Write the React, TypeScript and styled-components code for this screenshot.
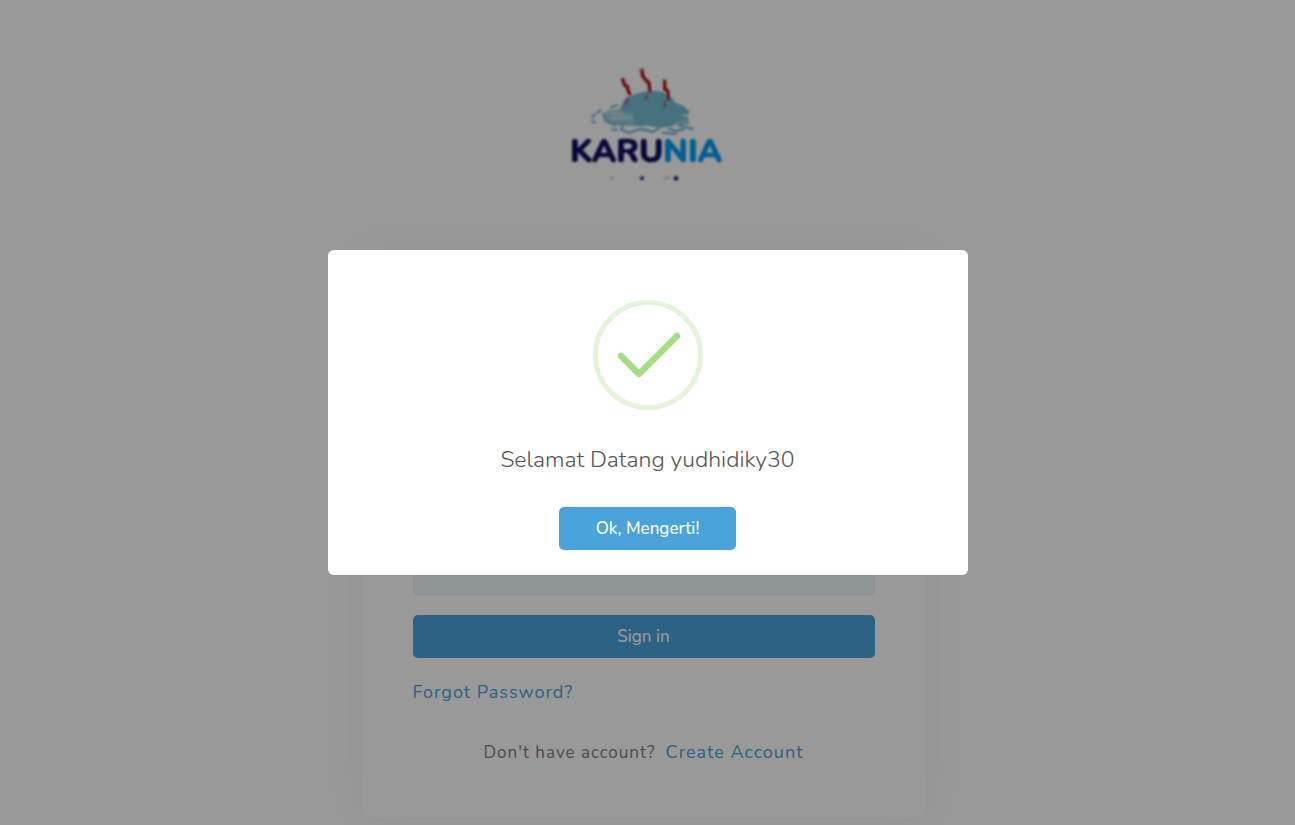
import React from "react";
import styled, { createGlobalStyle, css } from "styled-components";

const GlobalStyle = createGlobalStyle`
  *, *::before, *::after { box-sizing: border-box; }
  body {
    margin: 0;
    background: #ffffff;
    color: #7e7e7e;
    font-family: Nunito, "Open Sans", "Noto Sans", sans-serif;
    font-size: 17px;
    line-height: 24px;
  }
`;

const Page = styled.main`
  display: flex;
  flex-direction: column;
  align-items: center;
  padding: 55px 8px 8px 0;
`;

const Logo = styled.svg`
  width: 168px;
  height: 140px;
  margin-bottom: 60px;
`;

const Card = styled.form`
  display: flex;
  flex-direction: column;
  justify-content: flex-end;
  gap: 20px;
  width: 100%;
  max-width: 562px;
  min-height: 562px;
  padding: 50px;
  border-radius: 12px;
  background: #ffffff;
  box-shadow: 0 0 50px rgba(0, 0, 0, 0.05);
`;

const Field = styled.input`
  width: 100%;
  height: 43px;
  padding: 0 16px;
  border: 1px solid #ebf1f6;
  border-radius: 5px;
  background: #f1f8fd;
  font: inherit;
`;

const buttonStyle = css`
  height: 43px;
  padding: 0 37px;
  border: 0;
  border-radius: 5px;
  background: #4aa3da;
  color: #ffffff;
  font: inherit;
  font-weight: 500;
  cursor: pointer;
`;

const SubmitButton = styled.button`
  ${buttonStyle}
  width: 100%;
`;

const TextLink = styled.a`
  color: #4aa3da;
  font-size: 18px;
  letter-spacing: 1px;
  text-decoration: none;
`;

const ForgotRow = styled.div`
  display: flex;
  padding: 2px 0;
`;

const SignupRow = styled.p`
  display: flex;
  align-items: baseline;
  justify-content: center;
  gap: 10px;
  margin: 14px 0 2px;
  letter-spacing: 1px;
`;

const Backdrop = styled.div`
  position: fixed;
  inset: 0;
  display: flex;
  align-items: center;
  justify-content: center;
  padding: 10px;
  background: rgba(0, 0, 0, 0.4);
`;

const Dialog = styled.section`
  display: flex;
  flex-direction: column;
  align-items: center;
  width: 100%;
  max-width: 640px;
  padding: 50px 24px 25px;
  border-radius: 6px;
  background: #ffffff;
`;

const SuccessIcon = styled.svg`
  width: 110px;
  height: 110px;
`;

const Message = styled.p`
  margin: 34px 0 31px;
  color: #545454;
  font-size: 23px;
  font-weight: 300;
  line-height: 32px;
  text-align: center;
`;

const ConfirmButton = styled.button`
  ${buttonStyle}
`;

const Wordmark = styled.text`
  font-family: Nunito, sans-serif;
  font-size: 98px;
  font-weight: 800;
`;

function KaruniaLogo() {
  return (
    <Logo viewBox="0 0 504 420" role="img" aria-label="Karunia">
      <defs>
        <filter id="soft" x="-5%" y="-5%" width="110%" height="110%">
          <feGaussianBlur stdDeviation="2.5" />
        </filter>
      </defs>
      <g filter="url(#soft)">
        <path
          fill="#9dcfda"
          d="M188 148 L218 142 L236 212 L205 214 L138 204 L129 180 L144 166 L178 163Z"
        />
        <path
          fill="#76bcd4"
          d="M182 158 L192 135 L206 125 L226 118 L248 112 L276 106 L310 112 L332 124 L344 142 L374 155 L389 170 L384 179 L362 180 L385 188 L384 198 L349 202 L340 214 L300 218 L262 212 L222 214 L218 174 L190 171Z"
        />
        <g fill="none" stroke="#76bcd4" strokeWidth="7">
          <path d="M124 164 L98 184 L98 198 L110 208" strokeDasharray="16 5" />
          <path d="M150 157 L174 150 M129 174 L136 196 L161 209 L199 203" />
          <path d="M145 172 L190 180 M150 191 L216 187" stroke="#bfe2e9" />
          <path d="M153 223 L174 224 M188 210 L184 224 L206 233 L242 222 L278 230 L301 218" />
          <path d="M306 233 L350 237 M324 221 L349 228 L374 222 M356 211 L400 222" />
          <path d="M352 190 L382 187 M348 208 L388 203" />
        </g>
        <g fill="none" stroke="#b01212" strokeWidth="10">
          <path d="M187 70 L194 91 L202 94 L205 108 L211 121" />
          <path d="M245 41 L248 63 L258 76 L267 84 L270 114" />
          <path d="M314 74 L314 102 L323 108 L326 138" />
          <path d="M202 126 L198 150 M261 120 L256 136 M315 139 L313 157" strokeWidth="6" opacity="0.65" />
        </g>
        <Wordmark x="30" y="321" fill="#0b0b60" stroke="#0b0b60" strokeWidth="2">
          KARU<tspan fill="#009cf5" stroke="#009cf5">NIA</tspan>
        </Wordmark>
        <g fill="#26267a">
          <circle cx="155" cy="370" r="4" opacity="0.35" />
          <circle cx="246" cy="370" r="6" />
          <circle cx="316" cy="370" r="4" opacity="0.3" />
          <circle cx="326" cy="368" r="4" opacity="0.35" />
          <circle cx="348" cy="370" r="7" />
        </g>
      </g>
    </Logo>
  );
}

export default function App() {
  return (
    <>
      <GlobalStyle />
      <Page>
        <KaruniaLogo />
        <Card onSubmit={(e: React.FormEvent) => e.preventDefault()}>
          <Field type="text" aria-label="Username" />
          <Field type="password" aria-label="Password" />
          <SubmitButton type="submit">Sign in</SubmitButton>
          <ForgotRow>
            <TextLink href="#forgot">Forgot Password?</TextLink>
          </ForgotRow>
          <SignupRow>
            Don't have account?
            <TextLink href="#register">Create Account</TextLink>
          </SignupRow>
        </Card>
      </Page>
      <Backdrop>
        <Dialog role="dialog" aria-modal="true" aria-labelledby="dialog-message">
          <SuccessIcon viewBox="0 0 110 110" aria-hidden="true">
            <circle cx="55" cy="55" r="52.5" fill="none" stroke="#e4f4db" strokeWidth="5" />
            <path
              d="M28 56 L46 74 L84 36"
              fill="none"
              stroke="#a5dc86"
              strokeWidth="6.5"
              strokeLinecap="round"
              strokeLinejoin="round"
            />
          </SuccessIcon>
          <Message id="dialog-message">Selamat Datang yudhidiky30</Message>
          <ConfirmButton type="button">Ok, Mengerti!</ConfirmButton>
        </Dialog>
      </Backdrop>
    </>
  );
}
